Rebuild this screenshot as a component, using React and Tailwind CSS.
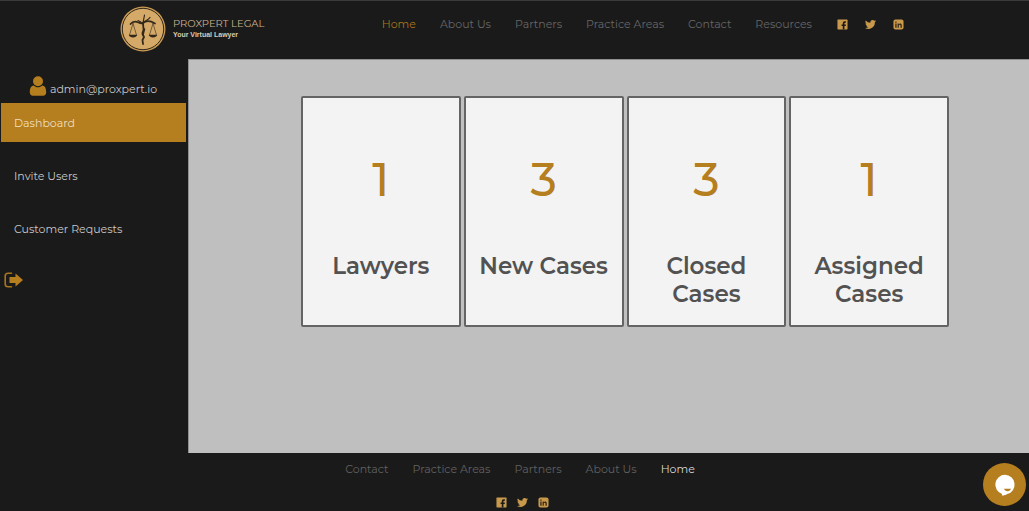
import React from "react";

const topLinks = ["Home", "About Us", "Partners", "Practice Areas", "Contact", "Resources"];
const bottomLinks = ["Contact", "Practice Areas", "Partners", "About Us", "Home"];
const cards = [
  { value: 1, label: "Lawyers" },
  { value: 3, label: "New Cases" },
  { value: 3, label: "Closed Cases" },
  { value: 1, label: "Assigned Cases" },
];

function Emblem() {
  return (
    <svg viewBox="0 0 46 46" className="size-[46px] shrink-0" aria-hidden="true">
      <circle cx="23" cy="23" r="22.5" fill="#c99a55" />
      <circle cx="23" cy="23" r="20.7" fill="#d5aa69" stroke="#33281a" strokeWidth="1" />
      <g fill="none" stroke="#33281a" strokeLinecap="round" strokeLinejoin="round">
        <path d="M10.500 18c2-2.500 5-3 8-1.500 2 1 3 1.200 4.500.5 3-2.500 7-2.500 12 .5" strokeWidth="1.700" />
        <path d="M18 14.500c1.500.5 3.500 2 5 3.500M24.500 9c-.5 3-1 5-1.500 8M30 11.500c-1.500 2.500-4.500 3-6.500 5" strokeWidth="1.200" />
        <path d="M23 17l.5 6c.5 2-1.500 3-1 5l1.500 3-1.500 3 .5 4" strokeWidth="1.800" />
        <path d="M24.500 23l-1.500 6" strokeWidth="1.500" />
        <path d="M13 17.500L9.500 29M13 17.500L16.500 29M33 17.500L29.500 29M33 17.500L36.500 29" strokeWidth="0.600" />
      </g>
      <path d="M8.800 28.800h8.400q-.8 2.700-4.200 2.700t-4.200-2.700zM28.800 28.800h8.400q-.8 2.700-4.200 2.700t-4.200-2.700z" fill="#33281a" />
    </svg>
  );
}

function Facebook() {
  return (
    <svg viewBox="0 0 12 12" className="size-[11px]" aria-hidden="true">
      <rect x="0.500" y="0.500" width="11" height="11" rx="0.800" fill="#c9994b" />
      <path d="M6.300 11.500V7.600H5V6h1.300V4.800c0-1.500.8-2.300 2.200-2.300h1.200v1.600h-.8c-.6 0-.8.300-.8.800V6h1.600l-.2 1.600H8.100v3.900z" fill="#1a1a1a" />
    </svg>
  );
}

function Twitter() {
  return (
    <svg viewBox="0 0 24 24" className="size-[11px]" fill="#c9994b" aria-hidden="true">
      <path d="M24 4.600a10 10 0 0 1-2.800.8 5 5 0 0 0 2.200-2.700c-1 .6-2 1-3.100 1.200a4.900 4.900 0 0 0-8.400 4.500A14 14 0 0 1 1.700 3.200a4.900 4.900 0 0 0 1.500 6.500 4.900 4.900 0 0 1-2.200-.6c0 2.300 1.600 4.400 3.900 4.900a5 5 0 0 1-2.200.1 4.900 4.900 0 0 0 4.600 3.400A9.900 9.900 0 0 1 0 19.500 14 14 0 0 0 21.500 7.100 10 10 0 0 0 24 4.600z" />
    </svg>
  );
}

function Linkedin() {
  return (
    <svg viewBox="0 0 12 12" className="size-[11px]" aria-hidden="true">
      <rect x="0.500" y="0.500" width="11" height="11" rx="2.200" fill="#c9994b" />
      <path d="M2.500 5h1.400v4.500H2.500zM2.500 2.700h1.400V4H2.500zM5 5h1.300v.6c.8-1.100 3.300-1 3.300 1.200v2.700H8.200V7.100c0-1.200-1.900-1.200-1.900 0v2.400H5z" fill="#33281a" />
    </svg>
  );
}

function Social({ className }) {
  return (
    <div className={className}>
      <a href="#facebook" aria-label="Facebook"><Facebook /></a>
      <a href="#twitter" aria-label="Twitter"><Twitter /></a>
      <a href="#linkedin" aria-label="LinkedIn"><Linkedin /></a>
    </div>
  );
}

export default function App() {
  return (
    <div className="flex min-h-screen flex-col bg-[#1a1a1a] font-['Montserrat','Inter',sans-serif] text-[11px] leading-4">
      <header className="flex h-[59px] items-start border-t border-[#3a3a3a] pl-[120px]">
        <a href="#home" className="flex items-center pt-[5px]">
          <Emblem />
          <span className="flex flex-col pb-px pl-[7px] text-[#c9b393]">
            <span className="text-[10px] leading-3 whitespace-nowrap">PROXPERT LEGAL</span>
            <span className="font-['Liberation_Sans',sans-serif] text-[7px] leading-[9px] font-bold text-[#dccbb0]">Your Virtual Lawyer</span>
          </span>
        </a>
        <nav aria-label="Main" className="ml-auto flex items-center gap-6 pt-[15px] pr-[25px] whitespace-nowrap">
          {topLinks.map((t) => (
            <a key={t} href="#page" className={t === "Home" ? "text-[#a97519]" : "text-[#666666]"}>{t}</a>
          ))}
        </nav>
        <Social className="flex gap-[17px] pt-[18px] pr-[125px]" />
      </header>

      <div className="flex flex-1">
        <aside className="w-[188px] shrink-0 pr-[2px] text-[#c8c8c8]">
          <div className="flex h-11 items-end justify-center gap-[3px] pb-[7px]">
            <svg viewBox="0 0 18 20" className="h-5 w-[18px]" fill="#b57e1e" aria-hidden="true">
              <circle cx="9" cy="5.300" r="5" />
              <path d="M4.800 9.500C1.500 9.500.8 13.500.8 16.300.8 18.500 2 19.800 4 19.800h10c2 0 3.200-1.300 3.200-3.500 0-2.800-.7-6.800-4-6.800-1.200 1.200-2.600 1.800-4.200 1.800s-3-.6-4.200-1.800z" />
            </svg>
            <span className="leading-[14px]">admin@proxpert.io</span>
          </div>
          <nav aria-label="Sidebar" className="flex flex-col gap-[14px]">
            <a href="#dashboard" className="ml-px flex h-[39px] items-center bg-[#b57e1e] pl-[13px] text-[#f0dfc0]">Dashboard</a>
            <a href="#invite" className="ml-px flex h-[39px] items-center pl-[13px]">Invite Users</a>
            <a href="#requests" className="ml-px flex h-[39px] items-center pl-[13px]">Customer Requests</a>
          </nav>
          <button type="button" aria-label="Sign out" className="mt-6 ml-1 block">
            <svg viewBox="0 0 20 16" className="h-4 w-5" aria-hidden="true">
              <path d="M7.500 1.200H4Q1.200 1.200 1.200 4v8q0 2.800 2.800 2.800h3.500" fill="none" stroke="#a97519" strokeWidth="1.600" strokeLinecap="round" />
              <path d="M5.500 5h6V1.500L19 8l-7.500 6.500V11h-6z" fill="#b57e1e" />
            </svg>
          </button>
        </aside>

        <main className="flex-1 border-t border-l border-[#909090] bg-[#bfbfbf] pt-9 pr-[80px] pb-[126px] pl-[112px]">
          <div className="grid grid-cols-4 gap-[3px]">
            {cards.map((c) => (
              <section key={c.label} className="flex min-h-[231px] flex-col items-center rounded-xs border-2 border-[#646464] bg-[#f3f3f3] px-2 pt-[55px] text-center">
                <p className="text-[46px] leading-[54px] font-medium text-[#b57e1e]">{c.value}</p>
                <h2 className="mt-[45px] text-[23px] leading-7 font-semibold text-[#525252]">{c.label}</h2>
              </section>
            ))}
          </div>
        </main>
      </div>

      <footer className="flex h-[58px] flex-col items-center pt-2">
        <nav aria-label="Footer" className="flex gap-6 pl-[11px] whitespace-nowrap">
          {bottomLinks.map((t) => (
            <a key={t} href="#page" className={t === "Home" ? "text-[#d8d8d8]" : "text-[#606060]"}>{t}</a>
          ))}
        </nav>
        <Social className="mt-5 flex gap-[10px] pl-[15px]" />
      </footer>

      <button type="button" aria-label="Open chat" className="fixed right-[3px] bottom-[5px] flex size-[43px] items-center justify-center rounded-full bg-[#b57e1e]">
        <svg viewBox="0 0 22 22" className="size-[22px]" aria-hidden="true">
          <path d="M11 .8a9.800 9.800 0 0 0-3 19.100l-.2 1.700c2 .1 3.900-.5 5.400-1.500A9.800 9.800 0 0 0 11 .8z" fill="#fff" />
          <path d="M10 14.800h7c-.5 1.700-1.800 2.400-3.500 2.400s-3-.7-3.500-2.400z" fill="#b57e1e" />
        </svg>
      </button>
    </div>
  );
}
